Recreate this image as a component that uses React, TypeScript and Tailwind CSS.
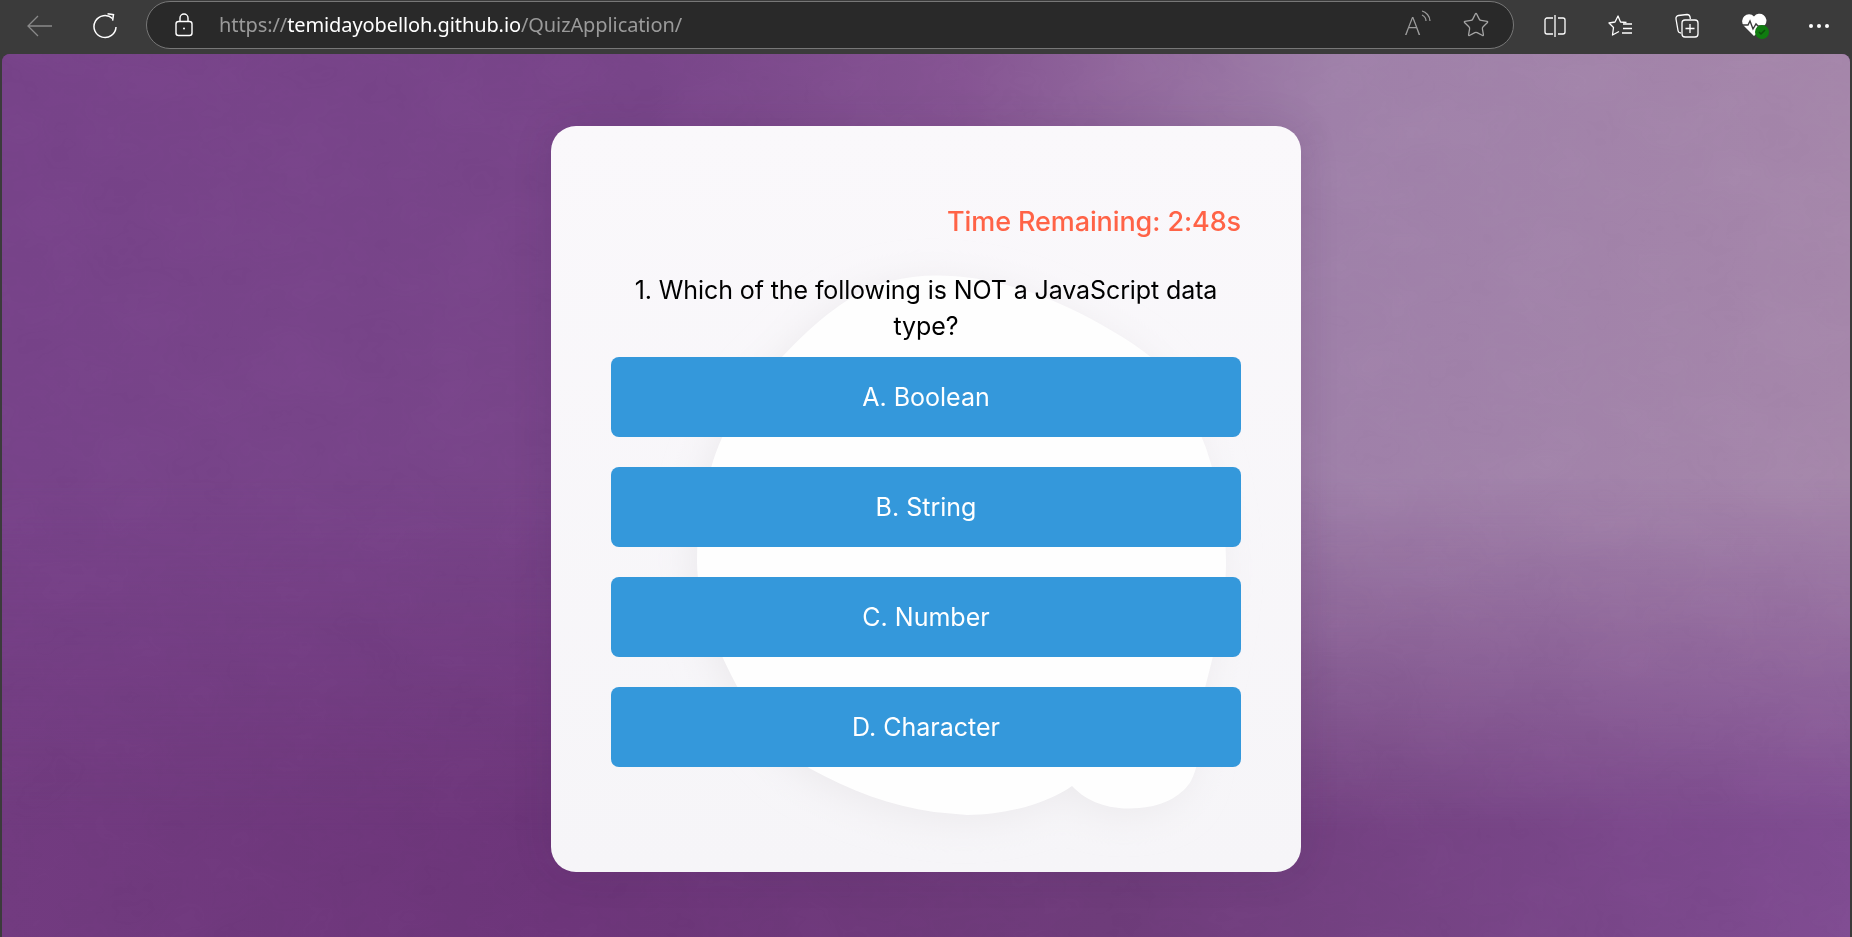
import React from 'react';
import { Star } from 'lucide-react';

const answers = ['A. Boolean', 'B. String', 'C. Number', 'D. Character'];

const blobPath =
  'M146 436C146 400 150 370 160 342C175 290 205 255 230 232C265 195 300 165 340 155C385 143 450 150 516 181C550 197 580 215 601 232C630 265 645 295 655 322C668 360 675 400 675 436C675 480 665 520 652 570C650 600 652 630 640 655C632 668 615 680 588 682C565 684 540 680 521 660C500 675 460 689 416 689L383 686C340 680 300 665 258 642C230 620 205 590 187 562C170 530 146 480 146 436Z';

const Toolbar: React.FC = () => (
  <div className="h-[54px] bg-[#3b3b3b] flex items-center shrink-0">
    <div className="w-[146px] shrink-0 flex items-center pl-[26px] gap-[40px] mb-[3px]">
      <svg width="26" height="24" viewBox="0 0 26 24" fill="none" stroke="#8a8a8a" strokeWidth="1.3">
        <path d="M26 12H2M12 2L2 12l10 10" />
      </svg>
      <svg width="26" height="26" viewBox="0 0 26 26" fill="none" stroke="white" strokeWidth="1.5">
        <path d="M20.500 5.500A11 11 0 1 0 24 14" />
        <path d="M15 1.500h6v6" transform="rotate(8 20 5)" />
      </svg>
    </div>
    <div className="h-[48px] w-[1368px] mb-[4px] rounded-full bg-[#292929] border border-[#777] flex items-center pl-[27px] pr-[23px]">
      <svg width="20" height="24" viewBox="0 0 20 24" fill="none" stroke="white" strokeWidth="1.4" className="mr-[25px]">
        <rect x="2" y="8.500" width="16" height="14" rx="2.500" />
        <path d="M6 8.500V5a4 4 0 0 1 8 0v3.500" />
        <circle cx="10" cy="15.500" r="1" fill="white" stroke="none" />
      </svg>
      <span className="font-['Noto_Sans',sans-serif] text-[20px] tracking-[-0.1px] text-[#9a9a9a]">
        https://<span className="text-white">temidayobelloh.github.io</span>/QuizApplication/
      </span>
      <div className="ml-auto flex items-center gap-[31px]">
        <span className="relative font-['Noto_Sans',sans-serif] text-[25px] font-light text-[#9c9c9c] w-[30px] pl-[4px] leading-none">
          A
          <svg width="10" height="12" viewBox="0 0 10 12" fill="none" stroke="#9c9c9c" strokeWidth="1.2" className="absolute -top-[3px] right-0">
            <path d="M1 1c4 1 8 5 8 10M1 5c2 1 4 3 4 6" />
          </svg>
        </span>
        <Star size={28} strokeWidth={1.1} className="text-[#a5a5a5]" />
      </div>
    </div>
    <div className="flex items-center pl-[8px] text-white mb-[2px]">
      <div className="w-[66px] flex justify-center">
        <svg width="24" height="24" viewBox="0 0 24 24" fill="none" stroke="white" strokeWidth="1.3">
          <path d="M10 4H4a2 2 0 0 0-2 2v12a2 2 0 0 0 2 2h6M15 4h5a2 2 0 0 1 2 2v12a2 2 0 0 1-2 2h-5M12 1v22" />
        </svg>
      </div>
      <div className="w-[66px] flex justify-center">
        <svg width="26" height="26" viewBox="0 0 26 26" fill="none" stroke="white" strokeWidth="1.3">
          <path d="M18.500 9.500L12.500 9L10 3L7 9L1 10L5.500 14.500L4.500 22L11 18.500" strokeLinejoin="round" />
          <path d="M15 11h9M15 15.500h9M14 20h10" />
        </svg>
      </div>
      <div className="w-[66px] flex justify-center">
        <svg width="26" height="26" viewBox="0 0 26 26" fill="none" stroke="white" strokeWidth="1.3">
          <path d="M7 20a3 3 0 0 1-3-2.500L2 6a3 3 0 0 1 2.500-3.500L13 1.500A3 3 0 0 1 16 4l.4 2" />
          <rect x="8" y="7" width="16" height="17" rx="3" />
          <path d="M16 11v9M11.500 15.500h9" />
        </svg>
      </div>
      <div className="w-[66px] flex justify-center">
        <svg width="30" height="28" viewBox="0 0 30 28" className="translate-x-[3px]">
          <path d="M13 24L3 14A6.800 6.800 0 0 1 13 4.500A6.800 6.800 0 0 1 24 13Z" fill="white" />
          <path d="M0 13h7l2-4 3 8 3-5 2 2h8" fill="none" stroke="#3b3b3b" strokeWidth="1.4" />
          <circle cx="21" cy="20" r="7" fill="#107c10" />
          <path d="M18 20l2 2 4-4" fill="none" stroke="#0c4f0c" strokeWidth="1.5" />
        </svg>
      </div>
      <div className="w-[66px] flex justify-center">
        <svg width="22" height="6" viewBox="0 0 22 6" fill="white">
          <circle cx="3" cy="3" r="2" />
          <circle cx="11" cy="3" r="2" />
          <circle cx="19" cy="3" r="2" />
        </svg>
      </div>
    </div>
  </div>
);

const App: React.FC = () => {
  return (
    <div className="h-[937px] w-[1852px] overflow-hidden bg-[#3b3b3b] flex flex-col">
      <Toolbar />
      <main className="relative flex-1 mx-[2px] rounded-t-[8px] overflow-hidden flex justify-center bg-[linear-gradient(90deg,#703a7e_0%,#6b3478_30%,#6d3b79_60%,#7e4b90_100%)]">
        {/* lighter upper part of the wallpaper */}
        <div className="absolute inset-0 bg-[linear-gradient(90deg,#764288_0%,#774488_35%,#845391_52%,#9e7fa8_72%,#a485a9_100%)] [mask-image:linear-gradient(180deg,black_48%,transparent_88%)]" />
        <svg className="absolute inset-0 w-full h-full opacity-[0.05] mix-blend-overlay" aria-hidden="true">
          <filter id="grain">
            <feTurbulence type="fractalNoise" baseFrequency="0.012 0.02" numOctaves="4" seed="7" />
            <feColorMatrix type="saturate" values="0" />
          </filter>
          <rect width="100%" height="100%" filter="url(#grain)" />
        </svg>

        {/* Quiz card */}
        <div className="relative mt-[72px] w-[750px] h-[746px] rounded-[25px] bg-[linear-gradient(180deg,#faf8fb_0%,#f6f5f8_100%)] overflow-hidden px-[60px] shadow-[0_0_40px_rgba(60,30,70,0.12)]">
          <svg className="absolute left-0 top-0" width="750" height="746" viewBox="0 0 750 746" fill="none">
            <defs>
              <filter id="blob-shadow" x="-20%" y="-20%" width="140%" height="140%">
                <feGaussianBlur stdDeviation="18" />
              </filter>
            </defs>
            <path d={blobPath} fill="#eceaed" filter="url(#blob-shadow)" transform="translate(-6 6)" />
            <path d={blobPath} fill="#fefefe" />
          </svg>
          <div className="relative">
            <p className="pt-[78px] text-right font-['Inter',sans-serif] font-medium text-[27px] leading-[36px] tracking-[-0.1px] text-[#ff6347]">
              Time Remaining: 2:48s
            </p>
            <h2 className="mt-[32px] px-[20px] text-center font-['Inter',sans-serif] text-[25px] leading-[36px] tracking-[-0.1px] text-black">
              1. Which of the following is NOT a JavaScript data type?
            </h2>
            <div className="mt-[13px] flex flex-col gap-[30px]">
              {answers.map(answer => (
                <button
                  key={answer}
                  className="h-[80px] w-full rounded-[8px] bg-[#3498db] text-white font-['Inter',sans-serif] text-[25px] pt-[2px]"
                >
                  {answer}
                </button>
              ))}
            </div>
          </div>
        </div>
      </main>
    </div>
  );
};

export default App;
